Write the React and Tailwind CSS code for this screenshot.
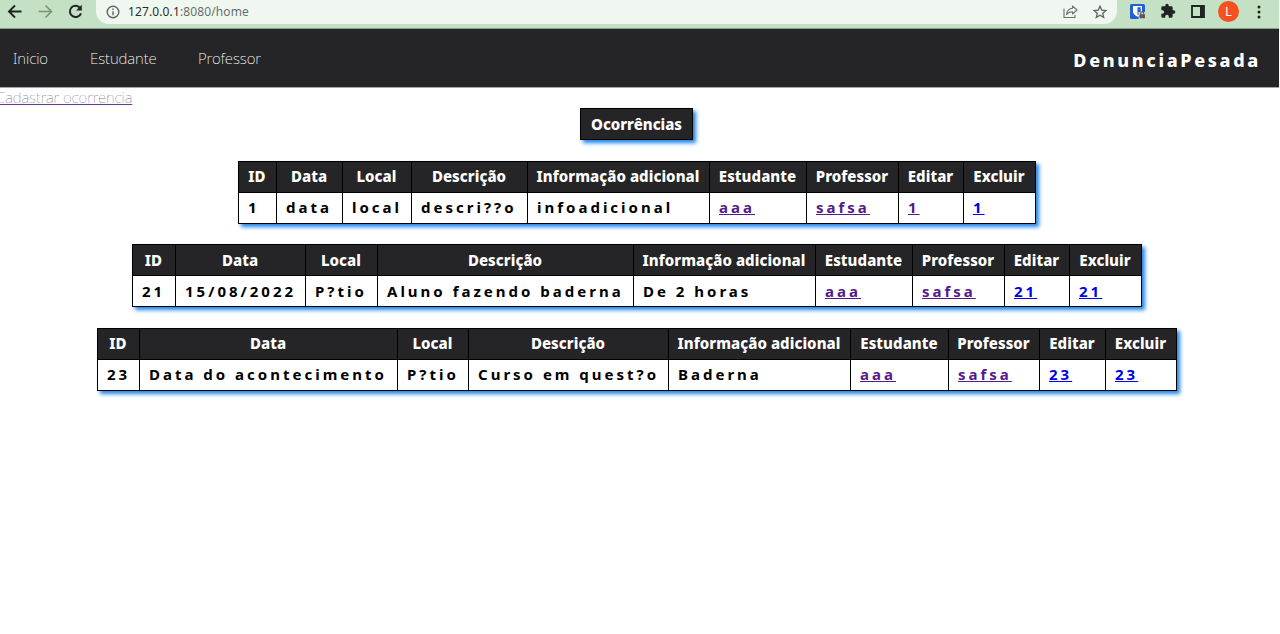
import React from "react";

const HEADERS = ["ID", "Data", "Local", "Descrição", "Informação adicional", "Estudante", "Professor", "Editar", "Excluir"];

const TABLES = [
  {
    margin: "ml-[238px] mb-[20px]",
    pad: "pb-[2px]",
    widths: [38, 66, 69, 116, 182, 97, 92, 65, 72],
    cells: ["1", "data", "local", "descri??o", "infoadicional", "aaa", "safsa", "1", "1"],
    editVisited: true,
  },
  {
    margin: "ml-[132px] mb-[21px]",
    pad: "pb-0",
    widths: [43, 130, 72, 256, 182, 97, 92, 65, 72],
    cells: ["21", "15/08/2022", "P?tio", "Aluno fazendo baderna", "De 2 horas", "aaa", "safsa", "21", "21"],
  },
  {
    margin: "ml-[97px]",
    pad: "pb-[2px]",
    widths: [42, 258, 71, 200, 182, 98, 91, 66, 71],
    cells: ["23", "Data do acontecimento", "P?tio", "Curso em quest?o", "Baderna", "aaa", "safsa", "23", "23"],
  },
];

function Browser() {
  return (
    <header className="flex h-[29px] w-[1279px] items-start border-b border-[#879f89] bg-[#c5e1c5] text-[#202422]">
      <svg className="mt-[3px] ml-[6px] h-[17px] w-[17px]" viewBox="0 0 17 17" fill="none" stroke="currentColor" strokeWidth="1.9">
        <path d="M15.5 8.5H3M9 2.5l-6 6 6 6" />
      </svg>
      <svg className="mt-[3px] ml-[14px] h-[17px] w-[17px] text-[#7c917e]" viewBox="0 0 17 17" fill="none" stroke="currentColor" strokeWidth="1.6">
        <path d="M1.5 8.5H14M8.500 2.500l6 6-6 6" />
      </svg>
      <svg className="mt-[3px] ml-[13px] h-[17px] w-[17px]" viewBox="0 0 17 17" fill="none" stroke="currentColor" strokeWidth="2">
        <path d="M13.4 5.2A5.7 5.7 0 1 0 14 10.3" />
        <path d="M14.8 1.8v5.7H9.1z" fill="currentColor" stroke="none" />
      </svg>
      <div className="ml-[12px] flex h-[24px] w-[1021px] items-center rounded-b-[13px] bg-[#eff7f0]">
        <svg className="ml-[10px] h-[14px] w-[14px] text-[#5f6661]" viewBox="0 0 14 14" fill="none" stroke="currentColor" strokeWidth="1.4">
          <circle cx="7" cy="7" r="5.8" />
          <path d="M7 6.3v4M7 3.6v1.5" />
        </svg>
        <span className="ml-[8px] font-['Noto_Sans',sans-serif] text-[12px] leading-none tracking-[0.12px] text-[#2b302d]">
          127.0.0.1<span className="text-[#68706a]">:8080/home</span>
        </span>
        <svg className="-mt-px ml-auto h-[15px] w-[15px] text-[#6a716c]" viewBox="0 0 15 15" fill="none" stroke="currentColor" strokeWidth="1.1">
          <path d="M1 4.5v9h11v-2.5" />
          <path d="M9.500 2l4.500 4-4.500 4V7.700C6.500 7.700 4.800 8.700 3.600 10.500 4 7 6 4.600 9.500 4.300z" strokeLinejoin="round" />
        </svg>
        <svg className="mr-[10px] -mt-px ml-[15px] h-[14px] w-[14px] text-[#5f6661]" viewBox="0 0 14 14" fill="none" stroke="currentColor" strokeWidth="1.3">
          <path d="M7 1.200l1.700 3.900 4.200.4-3.200 2.800 1 4.200L7 10.300l-3.700 2.200 1-4.200L1.100 5.500l4.200-.4z" />
        </svg>
      </div>
      <svg className="mt-[4px] ml-[13px] h-[15px] w-[16px]" viewBox="0 0 16 15">
        <rect width="15" height="15" rx="1.500" fill="#2160d0" />
        <path d="M3 2h9v5.500c0 2.500-2 4-4.500 5.300C5 11.500 3 10 3 7.500z" fill="#fff" />
        <path d="M7.500 3.300h3.200v4.200c0 1.800-1.500 2.800-3.200 3.800z" fill="#2160d0" />
        <rect x="8.500" y="8" width="7.500" height="7" fill="#d8d5d1" />
        <rect x="9.500" y="10.300" width="5.500" height="4" rx=".6" fill="#5d5552" />
        <path d="M10.700 10.500V9.200a1.500 1.500 0 0 1 3 0v1.300" fill="none" stroke="#5d5552" strokeWidth="1.100" />
      </svg>
      <svg className="mt-[3px] mr-px ml-[14px] h-[16px] w-[16px]" viewBox="0 0 24 24" fill="currentColor">
        <path d="M20.500 11H19V7a2 2 0 0 0-2-2h-4V3.500a2.500 2.500 0 0 0-5 0V5H4a2 2 0 0 0-2 2v3.800h1.500a2.700 2.700 0 0 1 0 5.400H2V20a2 2 0 0 0 2 2h3.800v-1.500a2.700 2.700 0 0 1 5.400 0V22H17a2 2 0 0 0 2-2v-4h1.500a2.500 2.500 0 0 0 0-5z" />
      </svg>
      <svg className="mt-[5px] ml-[14px] h-[13px] w-[14px]" viewBox="0 0 14 13">
        <path d="M1 1h12v11H1z" fill="none" stroke="currentColor" strokeWidth="1.800" />
        <path d="M9 1h4v11H9z" fill="currentColor" />
      </svg>
      <div className="mt-[1px] ml-[13px] flex h-[21px] w-[21px] items-center justify-center rounded-full bg-[#f4511e] font-['Roboto',sans-serif] text-[12px] text-white">L</div>
      <svg className="mt-[5px] ml-[18px] h-[14px] w-[4px]" viewBox="0 0 4 14" fill="currentColor">
        <circle cx="2" cy="2" r="1.500" />
        <circle cx="2" cy="7" r="1.500" />
        <circle cx="2" cy="12" r="1.500" />
      </svg>
    </header>
  );
}

function Occurrence({ margin, pad, widths, cells, editVisited }) {
  const total = widths.reduce((a, b) => a + b, 1);
  return (
    <table
      className={`${margin} table-fixed border-collapse bg-white shadow-[3px_3px_4px_#1e84e8]`}
      style={{ width: total }}
    >
      <colgroup>
        {widths.map((w, i) => (
          <col key={i} style={{ width: w }} />
        ))}
      </colgroup>
      <thead>
        <tr className="h-[31px] bg-[#252527] text-white">
          {HEADERS.map((h) => (
            <th key={h} className={`${pad} border border-black pt-0 pr-px pl-0 text-center text-[15px] leading-[20px] font-extrabold tracking-[0.06px] whitespace-nowrap`}>{h}</th>
          ))}
        </tr>
      </thead>
      <tbody>
        <tr className="h-[31px]">
          {cells.map((c, i) => {
            const visited = i < 7 || (editVisited && i === 7);
            return (
              <td key={i} className={`${pad} border border-black pt-0 pr-0 pl-[9px] text-[15px] leading-[20px] font-bold tracking-[3px] whitespace-nowrap text-black`}>
                {i < 5 ? c : (
                  <a className={visited ? "text-[#551a8b] underline" : "text-[#0000ee] underline"}>{c}</a>
                )}
              </td>
            );
          })}
        </tr>
      </tbody>
    </table>
  );
}

export default function App() {
  return (
    <div className="h-[634px] w-[1280px] overflow-hidden bg-white font-['Noto_Sans',sans-serif]">
      <Browser />
      <nav className="flex h-[58px] w-[1279px] items-center bg-[#252527] pl-[13px] text-[15px] font-extralight tracking-[-0.08px] text-white">
        <a className="w-[77px]">Inicio</a>
        <a className="w-[108px]">Estudante</a>
        <a>Professor</a>
        <span className="mt-[4px] mr-[18px] ml-auto text-[18px] font-extrabold tracking-[2.65px]">DenunciaPesada</span>
      </nav>
      <div className="h-[21px] w-[1279px] border-t border-[#a5a5a6]">
        <a className="-ml-[4px] block text-[15px] leading-[19px] font-thin tracking-[-0.05px] whitespace-nowrap text-[#80718c] underline decoration-[#693b97]">Cadastrar ocorrencia</a>
      </div>
      <h1 className="mb-[21px] ml-[580px] flex h-[32px] w-[113px] items-center justify-center border border-black bg-[#252527] text-[15px] font-extrabold text-white shadow-[3px_3px_4px_#1e84e8]">Ocorrências</h1>
      {TABLES.map((t) => (
        <Occurrence key={t.margin} {...t} />
      ))}
    </div>
  );
}
